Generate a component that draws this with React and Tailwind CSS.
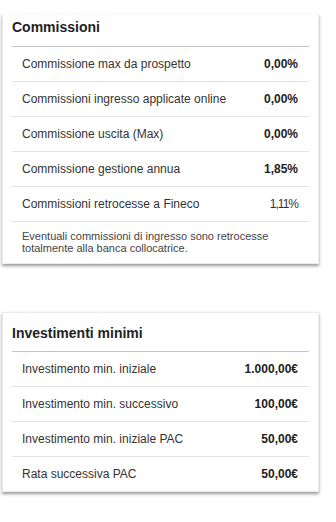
export default function App() {
  const comm = [
    ["Commissione max da prospetto", "0,00%", true],
    ["Commissioni ingresso applicate online", "0,00%", true],
    ["Commissione uscita (Max)", "0,00%", true],
    ["Commissione gestione annua", "1,85%", true],
    ["Commissioni retrocesse a Fineco", "1,11%", false],
  ];
  const inv = [
    ["Investimento min. iniziale", "1.000,00€"],
    ["Investimento min. successivo", "100,00€"],
    ["Investimento min. iniziale PAC", "50,00€"],
    ["Rata successiva PAC", "50,00€"],
  ];
  return (
    <div className="bg-white w-[336px] h-[522px] pl-[2px] text-[#333]" style={{ fontFamily: '"Liberation Sans", Arial, sans-serif' }}>
      <div className="pt-[14px]">
        <div className="w-[317px] bg-white border-x border-b border-[#ececec] shadow-[0_2px_3px_rgba(0,0,0,0.4)] px-[9px]">
          <div className="pt-[3px] pb-[9px] leading-[20px] text-[14px] font-bold text-[#222] border-b border-[#c4c4c4]">
            Commissioni
          </div>
          {comm.map(([l, v, b]) => (
            <div key={l} className="flex justify-between items-center h-[35px] border-b border-[#e3e3e3] pl-[10px] pr-[11px] text-[12px]">
              <span>{l}</span>
              <span className={b ? "font-bold text-[#222]" : "text-[#333] tracking-[-1px]"}>{v}</span>
            </div>
          ))}
          <div className="pt-[8px] pb-[9px] pl-[10px] text-[11px] leading-[12px] text-[#444]">
            Eventuali commissioni di ingresso sono retrocesse
            <br />
            totalmente alla banca collocatrice.
          </div>
        </div>
      </div>
      <div className="mt-[48px] w-[317px] bg-white border border-[#ececec] shadow-[0_2px_3px_rgba(0,0,0,0.4)] px-[9px]">
        <div className="pt-[10px] pb-[8px] leading-[20px] text-[14px] font-bold text-[#222] border-b border-[#c4c4c4]">
          Investimenti minimi
        </div>
        {inv.map(([l, v], i) => (
          <div key={l} className={"flex justify-between items-center pl-[10px] pr-[11px] text-[12px] " + (i < 3 ? "h-[35px] border-b border-[#e3e3e3]" : "h-[34px]")}>
            <span>{l}</span>
            <span className="font-bold text-[#222]">{v}</span>
          </div>
        ))}
      </div>
    </div>
  );
}
